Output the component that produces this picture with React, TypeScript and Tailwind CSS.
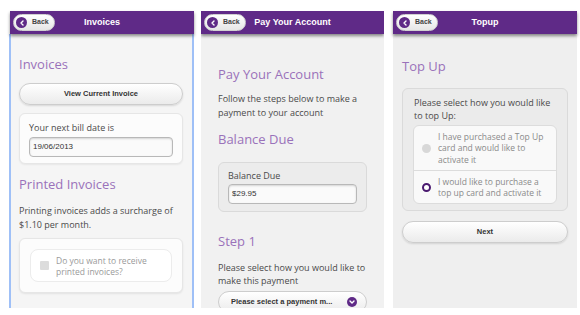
import React from 'react';

const PURPLE = 'bg-[#5f2a87]';

function Chevron({ dir }: { dir: 'left' | 'down' }) {
    const pts = dir === 'left' ? '4,1 2,3 4,5' : '1,2 3,4 5,2';
    return (
        <svg width="6" height="6" viewBox="0 0 6 6">
            <polyline points={pts} fill="none" stroke="white" strokeWidth="1.4" strokeLinecap="round" strokeLinejoin="round" />
        </svg>
    );
}

function Header({ title }: { title: string }) {
    return (
        <div className={`relative z-10 grid h-[23px] shrink-0 grid-cols-[1fr_auto_1fr] items-center px-[3px] ${PURPLE} shadow-[0_2px_3px_rgba(0,0,0,0.45)]`}>
            <div className="flex h-[17px] w-[42px] items-center gap-[5px] rounded-full border border-[#d0d0d0] bg-linear-to-b from-white to-[#e6e6e6] pl-[2px]">
                <span className="flex h-[11px] w-[11px] items-center justify-center rounded-full bg-[#5f2a87]">
                    <Chevron dir="left" />
                </span>
                <span className="font-['Liberation_Sans',Arial,sans-serif] text-[7px] font-bold text-[#444]">Back</span>
            </div>
            <span className="font-['Liberation_Sans',Arial,sans-serif] text-[9px] font-bold whitespace-nowrap text-white">{title}</span>
            <span />
        </div>
    );
}

function Heading({ children, className = '' }: { children: React.ReactNode; className?: string }) {
    return <h2 className={`text-[13px] leading-[19px] text-[#9a72ba] ${className}`}>{children}</h2>;
}

function Button({ children, className = '' }: { children: React.ReactNode; className?: string }) {
    return (
        <div className={`flex h-[22px] items-center justify-center rounded-full border border-[#cdcdcd] bg-linear-to-b from-white to-[#ebebeb] font-['Liberation_Sans',Arial,sans-serif] text-[7.5px] font-bold text-[#333] shadow-[0_1px_2px_rgba(0,0,0,0.12)] ${className}`}>
            {children}
        </div>
    );
}

function Input({ value }: { value: string }) {
    return (
        <div className="flex h-[20px] items-center rounded-[4px] border border-[#b8b8b8] bg-[#fafafa] px-[3px] font-['Liberation_Sans',Arial,sans-serif] text-[8px] text-[#333] shadow-[inset_0_1px_2px_rgba(0,0,0,0.15)]">
            {value}
        </div>
    );
}

function Invoices() {
    return (
        <div className="flex h-[297px] w-[185px] flex-col">
            <div className="shrink-0 pl-[1px]">
                <Header title="Invoices" />
            </div>
            <div className="flex-1 border-x-2 border-[#9fc0f7] bg-[#f5f5f5] px-[8px] pt-[21px] pr-[9px]">
                <Heading>Invoices</Heading>
                <Button className="mt-[9px]">View Current Invoice</Button>
                <div className="mt-[8px] rounded-[6px] border border-[#e6e6e6] bg-[#fcfcfc] px-[9px] pt-[7px] pb-[6px] shadow-[0_1px_2px_rgba(0,0,0,0.06)]">
                    <p className="text-[9px] leading-[14px] text-[#4a4a4a]">Your next bill date is</p>
                    <div className="mt-[2px]">
                        <Input value="19/06/2013" />
                    </div>
                </div>
                <Heading className="mt-[11px]">Printed Invoices</Heading>
                <p className="mt-[10px] text-[9px] leading-[14px] text-[#4a4a4a]">
                    Printing invoices adds a surcharge of $1.10 per month.
                </p>
                <div className="mt-[6px] rounded-[6px] border border-[#e6e6e6] bg-[#fcfcfc] p-[10px] shadow-[0_1px_2px_rgba(0,0,0,0.08)]">
                    <div className="flex h-[33px] items-center gap-[7px] rounded-[8px] border border-[#ececec] bg-white pl-[9px]">
                        <span className="h-[9px] w-[9px] shrink-0 rounded-[1px] bg-[#dcdcdc]" />
                        <span className="text-[8.5px] leading-[11px] text-[#9a9a9a]">
                            Do you want to receive
                            <br />
                            printed invoices?
                        </span>
                    </div>
                </div>
            </div>
        </div>
    );
}

function PayAccount() {
    return (
        <div className="ml-[7px] flex h-[297px] w-[183px] flex-col overflow-hidden">
            <Header title="Pay Your Account" />
            <div className="flex-1 bg-[#f1f1f1] px-[17px] pt-[31px]">
                <Heading>Pay Your Account</Heading>
                <p className="mt-[8px] text-[9px] leading-[13.5px] text-[#4a4a4a]">
                    Follow the steps below to make a payment to your account
                </p>
                <Heading className="mt-[11px]">Balance Due</Heading>
                <div className="mt-[13px] rounded-[6px] border border-[#dadada] bg-[#ececec] px-[9px] pt-[6px] pb-[7px]">
                    <p className="text-[9px] leading-[14px] text-[#4a4a4a]">Balance Due</p>
                    <div className="mt-[1px]">
                        <Input value="$29.95" />
                    </div>
                </div>
                <Heading className="mt-[20px]">Step 1</Heading>
                <p className="mt-[11px] text-[9px] leading-[12.5px] text-[#4a4a4a]">
                    Please select how you would like to make this payment
                </p>
                <div className="mt-[4px] flex h-[22px] items-center justify-between rounded-full border border-[#cdcdcd] bg-linear-to-b from-white to-[#ebebeb] pr-[9px] pl-[12px] font-['Liberation_Sans',Arial,sans-serif] text-[7.5px] font-bold text-[#333]">
                    <span>Please select a payment m...</span>
                    <span className="flex h-[10px] w-[10px] items-center justify-center rounded-full bg-[#5f2a87]">
                        <Chevron dir="down" />
                    </span>
                </div>
            </div>
        </div>
    );
}

function Radio({ checked }: { checked: boolean }) {
    return checked ? (
        <span className="h-[9px] w-[9px] shrink-0 rounded-full border-[2.5px] border-[#4b1a70] bg-white" />
    ) : (
        <span className="h-[9px] w-[9px] shrink-0 rounded-full bg-[#d8d8d8]" />
    );
}

function Topup() {
    return (
        <div className="ml-[9px] flex h-[297px] w-[184px] flex-col">
            <Header title="Topup" />
            <div className="flex-1 bg-[#efefef] px-[9px] pt-[23px]">
                <Heading>Top Up</Heading>
                <div className="mt-[12px] rounded-[6px] border border-[#dadada] bg-[#ebebeb] px-[10px] pt-[7px] pb-[6px]">
                    <p className="pl-[1px] text-[9px] leading-[13px] text-[#4a4a4a]">
                        Please select how you would like to top Up:
                    </p>
                    <div className="mt-[3px] rounded-[6px] border border-[#dcdcdc] bg-[#f9f9f9] text-[8.5px] leading-[11.5px] text-[#8a8a8a]">
                        <div className="flex h-[45px] items-center gap-[7px] border-b border-[#dcdcdc] pl-[8px]">
                            <Radio checked={false} />
                            <span>
                                I have purchased a Top Up
                                <br />
                                card and would like to
                                <br />
                                activate it
                            </span>
                        </div>
                        <div className="flex h-[32px] items-center gap-[7px] pl-[8px]">
                            <Radio checked />
                            <span>
                                I would like to purchase a
                                <br />
                                top up card and activate it
                            </span>
                        </div>
                    </div>
                </div>
                <Button className="mt-[10px]">Next</Button>
            </div>
        </div>
    );
}

export default function App() {
    return (
        <div className="flex h-[315px] w-[580px] items-start overflow-hidden bg-white pt-[11px] pl-[9px] font-['Open_Sans',sans-serif]">
            <Invoices />
            <PayAccount />
            <Topup />
        </div>
    );
}
